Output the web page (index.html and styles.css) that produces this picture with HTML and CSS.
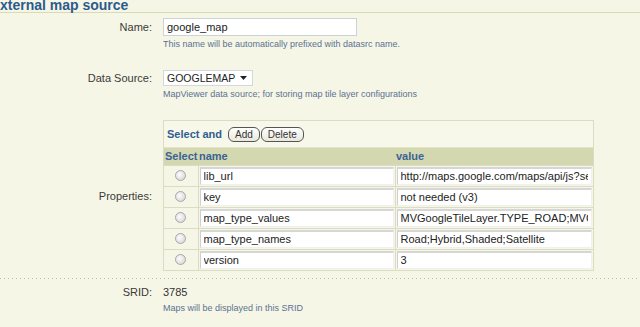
FILE: index.html
```html
<!DOCTYPE html>
<html lang="en">
<head>
    <meta charset="UTF-8">
    <title>External map source</title>
    <link rel="stylesheet" href="styles.css">
</head>
<body>
    <div class="page">
        <h2 class="title">xternal map source</h2>

        <div class="field field-name">
            <label class="field-label">Name:</label>
            <div class="field-body">
                <input class="text-input" type="text" value="google_map">
                <p class="hint">This name will be automatically prefixed with datasrc name.</p>
            </div>
        </div>

        <div class="field field-spaced">
            <label class="field-label">Data Source:</label>
            <div class="field-body">
                <div class="select-box">
                    <span>GOOGLEMAP</span>
                    <svg width="7" height="4" viewBox="0 0 7 4"><path d="M0 0h7L3.5 4z" fill="#222"/></svg>
                </div>
                <p class="hint">MapViewer data source; for storing map tile layer configurations</p>
            </div>
        </div>

        <div class="field field-spaced field-center">
            <label class="field-label">Properties:</label>
            <div class="field-body">
                <div class="props-box">
                    <div class="props-bar">
                        <span class="props-caption">Select and</span>
                        <button class="small-btn">Add</button>
                        <button class="small-btn">Delete</button>
                    </div>
                    <table class="props">
                        <thead>
                            <tr>
                                <th class="col-select">Select</th>
                                <th class="col-name">name</th>
                                <th class="col-value">value</th>
                            </tr>
                        </thead>
                        <tbody>
                            <tr>
                                <td class="col-select"><input class="radio" type="radio" name="prop"></td>
                                <td><input class="cell-input" type="text" value="lib_url"></td>
                                <td><input class="cell-input" type="text" value="http://maps.google.com/maps/api/js?sensor=false"></td>
                            </tr>
                            <tr>
                                <td class="col-select"><input class="radio" type="radio" name="prop"></td>
                                <td><input class="cell-input" type="text" value="key"></td>
                                <td><input class="cell-input" type="text" value="not needed (v3)"></td>
                            </tr>
                            <tr>
                                <td class="col-select"><input class="radio" type="radio" name="prop"></td>
                                <td><input class="cell-input" type="text" value="map_type_values"></td>
                                <td><input class="cell-input" type="text" value="MVGoogleTileLayer.TYPE_ROAD;MVGoogleTileLayer.TYPE_HYBRID"></td>
                            </tr>
                            <tr>
                                <td class="col-select"><input class="radio" type="radio" name="prop"></td>
                                <td><input class="cell-input" type="text" value="map_type_names"></td>
                                <td><input class="cell-input" type="text" value="Road;Hybrid,Shaded;Satellite"></td>
                            </tr>
                            <tr>
                                <td class="col-select"><input class="radio" type="radio" name="prop"></td>
                                <td><input class="cell-input" type="text" value="version"></td>
                                <td><input class="cell-input" type="text" value="3"></td>
                            </tr>
                        </tbody>
                    </table>
                </div>
            </div>
        </div>

        <div class="dots"></div>

        <div class="field field-srid">
            <label class="field-label">SRID:</label>
            <div class="field-body">
                <div class="plain-value">3785</div>
                <p class="hint">Maps will be displayed in this SRID</p>
            </div>
        </div>
    </div>
</body>
</html>
```

FILE: styles.css
```css
/* Global Settings */
* {
    box-sizing: border-box;
    margin: 0;
    padding: 0;
}

body {
    background-color: #f6f6e7;
    color: #333;
    font-family: "Liberation Sans", Arial, sans-serif;
    font-size: 11px;
    overflow: hidden;
}

.page {
    width: 640px;
}

/* Title */
.title {
    margin-top: -1px;
    height: 14px;
    font-size: 14px;
    line-height: 13px;
    font-weight: bold;
    color: #2b5b8c;
    border-bottom: 1px solid #d8dab6;
    white-space: nowrap;
}

/* Form rows */
.field {
    display: grid;
    grid-template-columns: 152px 1fr;
    column-gap: 11px;
    align-items: baseline;
}

.field-name {
    margin-top: 5px;
}

.field-spaced {
    margin-top: 20px;
}

.field-center {
    align-items: center;
}

.field-label {
    text-align: right;
    color: #3a3a3a;
}

.hint {
    margin-top: 2px;
    font-size: 9px;
    line-height: 12px;
    color: #5a7291;
}

.text-input {
    display: block;
    width: 194px;
    height: 18px;
    padding: 0 3px;
    background: #fff;
    border: 1px solid #cdd2da;
    font-family: "Liberation Sans", Arial, sans-serif;
    font-size: 11px;
    color: #222;
    outline: none;
}

.select-box {
    display: flex;
    align-items: center;
    justify-content: space-between;
    width: 90px;
    height: 16px;
    padding: 0 5px 0 3px;
    background: #fff;
    border: 1px solid #d4d8de;
    color: #222;
    font-size: 10.5px;
}

/* Properties table */
.props-box {
    width: 431px;
    border: 1px solid #dcdcc2;
}

.props-bar {
    display: flex;
    align-items: center;
    height: 27px;
    padding: 0 3px;
    background: #f8f8ea;
    border-bottom: 1px solid #e4e4cc;
}

.props-caption {
    font-weight: bold;
    color: #2f5f92;
    margin-right: 6px;
}

.small-btn {
    height: 15px;
    padding: 0 6px;
    margin-right: 1px;
    border: 1px solid #555;
    border-radius: 6px;
    background: linear-gradient(#ffffff, #e8e8dc);
    font-family: "Liberation Sans", Arial, sans-serif;
    font-size: 10px;
    color: #333;
    line-height: 13px;
}

.props {
    width: 429px;
    border-collapse: collapse;
    table-layout: fixed;
}

.props th {
    height: 17px;
    padding: 0 1px;
    background: #d3d8b1;
    color: #3b6394;
    font-weight: bold;
    text-align: left;
}

.props td {
    height: 21px;
    padding: 1px;
    border-top: 1px solid #dcdcc2;
    border-left: 1px solid #dcdcc2;
}

.props td:first-child {
    border-left: none;
    text-align: center;
}

.col-select {
    width: 34px;
}

.col-name {
    width: 197px;
}

.col-value {
    width: 198px;
}

.radio {
    appearance: none;
    display: block;
    width: 11px;
    height: 11px;
    margin: 0 auto;
    border: 1px solid #a8a8a8;
    border-radius: 50%;
    background: radial-gradient(circle at 40% 40%, #fdfdfd, #d0d0d0);
}

.cell-input {
    display: block;
    width: 100%;
    height: 18px;
    padding: 0 3px;
    background: #fff;
    border: 1px solid #f0f0f0;
    border-top: 2px solid #d6d6d6;
    border-left: 1px solid #d0d0d0;
    font-family: "Liberation Sans", Arial, sans-serif;
    font-size: 11px;
    color: #222;
    outline: none;
}

/* Separator */
.dots {
    height: 1px;
    margin-top: 7px;
    background: repeating-linear-gradient(to right, #bdbda6 0 1px, transparent 1px 4px);
}

.field-srid {
    margin-top: 6px;
}

.plain-value {
    line-height: 14px;
    color: #333;
}

.field-srid .hint {
    margin-top: 3px;
}
```
